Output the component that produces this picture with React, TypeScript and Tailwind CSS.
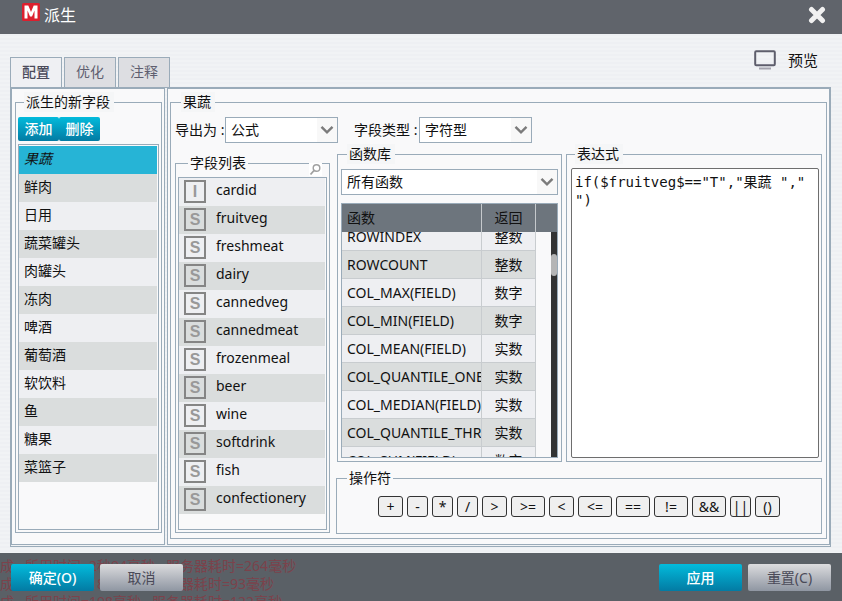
import { useLayoutEffect, useRef, useState } from "react";
import type { ReactNode } from "react";

const newFields = ["果蔬", "鲜肉", "日用", "蔬菜罐头", "肉罐头", "冻肉", "啤酒", "葡萄酒", "软饮料", "鱼", "糖果", "菜篮子"];

const fields = [
  { name: "cardid", kind: "I" },
  { name: "fruitveg", kind: "S" },
  { name: "freshmeat", kind: "S" },
  { name: "dairy", kind: "S" },
  { name: "cannedveg", kind: "S" },
  { name: "cannedmeat", kind: "S" },
  { name: "frozenmeal", kind: "S" },
  { name: "beer", kind: "S" },
  { name: "wine", kind: "S" },
  { name: "softdrink", kind: "S" },
  { name: "fish", kind: "S" },
  { name: "confectionery", kind: "S" },
];

const functions = [
  ["ROWINDEX", "整数"],
  ["ROWCOUNT", "整数"],
  ["COL_MAX(FIELD)", "数字"],
  ["COL_MIN(FIELD)", "数字"],
  ["COL_MEAN(FIELD)", "实数"],
  ["COL_QUANTILE_ONE(FIELD)", "实数"],
  ["COL_MEDIAN(FIELD)", "实数"],
  ["COL_QUANTILE_THREE(FIELD)", "实数"],
  ["COL_SUM(FIELD)", "数字"],
];

const operators = [
  { op: "+", width: "w-[25px]" },
  { op: "-", width: "w-[21px]" },
  { op: "*", width: "w-[21px]" },
  { op: "/", width: "w-[21px]" },
  { op: ">", width: "w-[25px]" },
  { op: ">=", width: "w-[34px]" },
  { op: "<", width: "w-[25px]" },
  { op: "<=", width: "w-[34px]" },
  { op: "==", width: "w-[34px]" },
  { op: "!=", width: "w-[34px]" },
  { op: "&&", width: "w-[34px]" },
  { op: "||", width: "w-[21px]" },
  { op: "()", width: "w-[25px]" },
];

const logLines = [
  "成,  所用时间=2秒94毫秒,  服务器耗时=264毫秒",
  "成,  所用时间=187毫秒,  服务器耗时=93毫秒",
  "成,  所用时间=198毫秒,  服务器耗时=122毫秒",
];

function Group({ title, plain, className, children }: { title: string; plain?: boolean; className: string; children: ReactNode }) {
  return (
    <fieldset className={`min-w-0 border border-[#9aabb9] ${className}`}>
      <legend className={`h-5 leading-5 ${plain ? "ml-2.5 px-0.5" : "ml-1.5 bg-[#f5f6f7] pl-0.5 pr-1"}`}>{title}</legend>
      {children}
    </fieldset>
  );
}

function Select({ id, label, options, className }: { id: string; label?: string; options: string[]; className: string }) {
  return (
    <div className={`relative ${className}`}>
      <select
        id={id}
        aria-label={label}
        className="block h-[26px] w-full appearance-none border border-[#9aabb9] bg-white pl-[5px] pr-6 outline-none"
      >
        {options.map((o) => (
          <option key={o}>{o}</option>
        ))}
      </select>
      <span className="pointer-events-none absolute inset-y-px right-px flex w-5 items-center justify-center bg-[#f8f8f8]">
        <svg width="14" height="10" viewBox="0 0 14 10" fill="none" stroke="#7b7b7b" strokeWidth="2.4">
          <path d="M1.5 1.8 7 7.3l5.5-5.5" />
        </svg>
      </span>
    </div>
  );
}

function FooterButton({ primary, children }: { primary?: boolean; children: ReactNode }) {
  return (
    <button
      type="button"
      className={`h-[27px] w-[83px] rounded-xs ${
        primary
          ? "bg-linear-to-b from-[#03bbdc] to-[#037ba3] font-medium text-white"
          : "bg-linear-to-b from-[#dcdcde] to-[#8f96a2] text-[#4a4a58]"
      }`}
    >
      {children}
    </button>
  );
}

export default function App() {
  const [selected, setSelected] = useState(0);
  const [expression, setExpression] = useState('if($fruitveg$=="T","果蔬 ","\n")');
  const scroller = useRef<HTMLDivElement>(null);

  useLayoutEffect(() => {
    if (scroller.current) scroller.current.scrollTop = 9;
  }, []);

  return (
    <div className="flex min-h-screen flex-col bg-[#eff1f3] font-['Noto_Sans','Noto_Sans_CJK_SC',sans-serif] text-[14px] leading-5 text-[#111]">
      <header className="flex h-[34px] items-center justify-between bg-[#60646b] pb-1 pl-[22px] pr-4">
        <div className="flex items-center gap-1">
          <svg width="18" height="26" viewBox="0 0 18 26">
            <rect x="0" y="1" width="18" height="18" rx="1.5" fill="#dc1f2e" />
            <path d="M2.5 16.5V3.5h3.8L9 10l2.7-6.500h3.800v13h-3V8.500L10 14.500H8L5.500 8.500v8z" fill="#fff" />
          </svg>
          <h1 className="text-[16px] leading-6 text-white">派生</h1>
        </div>
        <button type="button" aria-label="关闭" className="flex">
          <svg width="18" height="18" viewBox="0 0 18 18" stroke="#f1f1f1" strokeWidth="5" strokeLinecap="round">
            <path d="M3.500 3.500l11 11M14.500 3.500l-11 11" />
          </svg>
        </button>
      </header>

      <main className="flex flex-1 flex-col bg-[repeating-linear-gradient(to_bottom,#eef0f3_0_2px,#f1f3f5_2px_4px)] pb-1.5 pl-2.5 pr-[11px]">
        <div className="flex h-[53px] items-end justify-between">
          <div role="tablist" className="flex gap-0.5">
            {["配置", "优化", "注释"].map((tab, i) => (
              <button
                key={tab}
                type="button"
                role="tab"
                aria-selected={i === 0}
                className={`h-[30px] w-[52px] border border-b-0 border-[#9aabb9] pb-0.5 ${
                  i === 0 ? "bg-[#eff0f3] font-medium text-[#4b4b5b]" : "bg-[#dddee2] text-[#5f5f70]"
                }`}
              >
                {tab}
              </button>
            ))}
          </div>
          <button type="button" className="mb-[17px] mr-[13px] flex items-center gap-3 text-[15px]">
            <svg width="22" height="20" viewBox="0 0 22 20" fill="none">
              <rect x="1.200" y="1.200" width="19.600" height="14" rx="1" stroke="#5e5e6c" strokeWidth="2" />
              <path d="M5 18.500h12" stroke="#a4a4ae" strokeWidth="2" />
            </svg>
            预览
          </button>
        </div>

        <div className="flex flex-1 gap-0.5 border border-[#9aabb9] pb-px">
          <section className="flex w-[154px] flex-col border border-[#9aabb9] bg-[#f9fafb]/90 pb-[11px] pl-[3px] pr-0.5 pt-[3px]">
            <Group title="派生的新字段" className="flex flex-1 flex-col px-0.5 pb-0.5">
              <div className="flex h-full flex-col pt-[5px]">
                <div className="flex">
                  {["添加", "删除"].map((b) => (
                    <button
                      key={b}
                      type="button"
                      className="h-6 w-[41px] rounded-xs bg-linear-to-b from-[#03bbdc] to-[#037ba3] font-medium text-white"
                    >
                      {b}
                    </button>
                  ))}
                </div>
                <ul className="mt-[3px] flex-1 border border-[#9aabb9] pr-px pt-px">
                  {newFields.map((f, i) => (
                    <li key={f} className="odd:bg-[#eeeff2] even:bg-[#dadddd]">
                      <button
                        type="button"
                        onClick={() => setSelected(i)}
                        className={`block h-7 w-full pb-0.5 pl-[5px] text-left ${selected === i ? "bg-[#26b4d6] italic" : ""}`}
                      >
                        {f}
                      </button>
                    </li>
                  ))}
                </ul>
              </div>
            </Group>
          </section>

          <section className="flex min-w-0 flex-1 flex-col border border-[#9aabb9] bg-[#f9fafb]/90 pb-[5px] pl-0.5 pr-0.5 pt-[3px]">
            <Group title="果蔬" className="flex-1 pb-1 pl-1 pr-1">
              <div className="flex h-full flex-col">
                <div className="flex items-center pt-[5px]">
                  <label htmlFor="exportAs" className="w-[50px] whitespace-nowrap">导出为 :</label>
                  <Select id="exportAs" options={["公式"]} className="w-[113px]" />
                  <label htmlFor="fieldType" className="ml-4 w-[65px] whitespace-nowrap">字段类型 :</label>
                  <Select id="fieldType" options={["字符型"]} className="w-[113px]" />
                </div>

                <div className="flex flex-1 gap-1.5">
                  <div className="relative mb-px mt-2.5 flex w-[155px] shrink-0 flex-col">
                    <Group title="字段列表" plain className="flex-1 px-0.5 pb-0.5">
                      <div className="flex h-full flex-col pt-1">
                        <ul className="flex-1 border border-[#9aabb9] pr-px">
                          {fields.map((f) => (
                            <li key={f.name} className="flex h-7 items-start gap-2.5 pl-[5px] pt-0.5 odd:bg-[#eeeff2] even:bg-[#dadddd]">
                              <span className="flex h-[23px] w-[22px] items-center justify-center border-2 border-[#858585] font-['Liberation_Sans',sans-serif] text-[16px] font-bold text-[#999]">
                                {f.kind}
                              </span>
                              {f.name}
                            </li>
                          ))}
                        </ul>
                      </div>
                    </Group>
                    <button type="button" aria-label="搜索" className="absolute right-2 top-2.5 bg-white">
                      <svg width="13" height="13" viewBox="0 0 13 13" fill="none" stroke="#a0a0a0" strokeWidth="1.400">
                        <circle cx="7.500" cy="5" r="3.300" />
                        <path d="M5 7.500 1.500 11.500" strokeWidth="1.800" />
                      </svg>
                    </button>
                  </div>

                  <div className="flex min-w-0 flex-1 flex-col gap-1.5">
                    <div className="flex flex-1 gap-1 pl-px pt-px">
                      <Group title="函数库" className="w-[225px] shrink-0 px-[3px] pb-[3px]">
                        <div className="pt-[5px]">
                          <Select id="library" label="函数库" options={["所有函数"]} className="w-full" />
                          <div className="mt-2 border border-[#9aabb9]">
                            <div className="flex h-7 items-center bg-[#6d757d]">
                              <span className="flex h-7 w-[140px] items-center border-r border-[#c5c9cc] pl-[5px]">函数</span>
                              <span className="flex h-7 w-[54px] items-center justify-center border-r border-[#c5c9cc]">返回</span>
                            </div>
                            <div className="relative">
                              <div ref={scroller} className="h-[225px] overflow-y-auto [scrollbar-width:none]">
                                <table className="w-[194px] table-fixed border-separate border-spacing-0">
                                  <tbody>
                                    {functions.map(([name, ret]) => (
                                      <tr key={name} className="odd:bg-[#eeeff2] even:bg-[#dadddd]">
                                        <td className="h-7 w-[140px] overflow-hidden whitespace-nowrap border-b border-r border-[#c8cccf] py-0 pl-[5px] pr-0">{name}</td>
                                        <td className="h-7 w-[54px] border-b border-r border-[#c8cccf] p-0 text-center">{ret}</td>
                                      </tr>
                                    ))}
                                  </tbody>
                                </table>
                              </div>
                              <div className="absolute inset-y-0 right-0 w-1.5 bg-[#333] pt-[22px]">
                                <div className="h-[22px] rounded-sm bg-[#b5b5b5]" />
                              </div>
                            </div>
                          </div>
                        </div>
                      </Group>

                      <Group title="表达式" className="flex-1 px-0.5 pb-[3px]">
                        <div className="flex h-full pl-0.5 pt-1">
                          <textarea
                            aria-label="表达式"
                            value={expression}
                            onChange={(e) => setExpression(e.target.value)}
                            className="w-full resize-none rounded-xs border border-[#6e6e6e] bg-white px-[3px] py-1 font-['DejaVu_Sans_Mono','Noto_Sans_CJK_SC',monospace] leading-[18px] outline-none"
                          />
                        </div>
                      </Group>
                    </div>

                    <Group title="操作符" plain className="h-[66px]">
                      <div className="flex justify-center gap-1 pt-2">
                        {operators.map(({ op, width }) => (
                          <button
                            key={op}
                            type="button"
                            onClick={() => setExpression((v) => v + op)}
                            className={`flex h-[21px] items-center justify-center rounded-[3px] border border-[#333] bg-[#efefef] leading-[18px] ${width}`}
                          >
                            {op}
                          </button>
                        ))}
                      </div>
                    </Group>
                  </div>
                </div>
              </div>
            </Group>
          </section>
        </div>
      </main>

      <footer className="relative h-12 overflow-hidden bg-[#5a6066] px-[11px]">
        <div className="absolute left-0 top-1 whitespace-pre leading-[18px] text-[#7c424b]">
          {logLines.map((line) => (
            <p key={line}>{line}</p>
          ))}
        </div>
        <div className="relative flex justify-between pt-[11px]">
          <div className="flex gap-1.5">
            <FooterButton primary>确定(O)</FooterButton>
            <FooterButton>取消</FooterButton>
          </div>
          <div className="flex gap-1.5">
            <FooterButton primary>应用</FooterButton>
            <FooterButton>重置(C)</FooterButton>
          </div>
        </div>
      </footer>
    </div>
  );
}
